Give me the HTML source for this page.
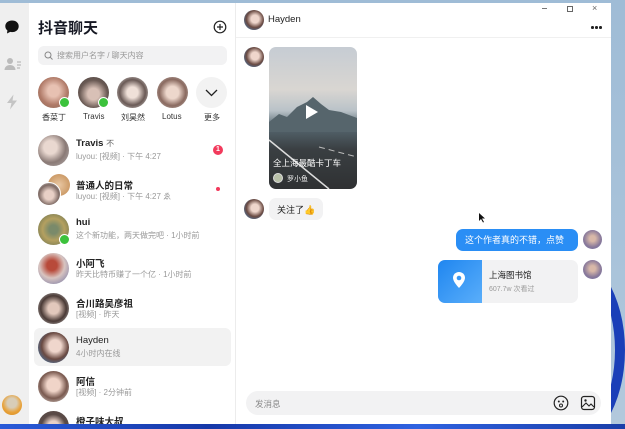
<!DOCTYPE html>
<html style="width:625px;height:429px;overflow:hidden"><head><meta charset="utf-8"><style>
*{margin:0;padding:0;box-sizing:border-box}
body{width:625px;height:429px;overflow:hidden;font-family:"Liberation Sans","Noto Sans CJK SC",sans-serif}
#root{position:relative;width:625px;height:429px;overflow:hidden;background:linear-gradient(180deg,#9fbcd6 0%,#a9c3da 60%,#b3c9dc 100%)}
.abs{position:absolute}
.av{position:absolute;border-radius:50%}
.t{position:absolute;white-space:nowrap}
.on{position:absolute;width:9px;height:9px;border-radius:50%;background:#3cc23c;border:1.5px solid #fff}
</style></head><body><div id="root">
<div class="abs" style="left:500px;top:250px;width:125px;height:200px;border-radius:50%;border:10px solid #1a3fb8;"></div>
<div class="abs" style="left:0;top:3px;width:611px;height:422px;background:#fff"></div>
<div class="abs" style="left:0;top:3px;width:29px;height:422px;background:#efefef"></div>
<svg class="abs" style="left:4px;top:19px" width="16" height="16" viewBox="0 0 16 16"><path d="M8 1.5C4 1.5 1.3 4 1.3 7.2c0 1.7.8 3.2 2.1 4.2L3 14.5l3.2-1.6c.6.1 1.2.2 1.8.2 4 0 6.7-2.6 6.7-5.9S12 1.5 8 1.5z" fill="#111"/></svg>
<svg class="abs" style="left:4px;top:57px" width="18" height="14" viewBox="0 0 18 14"><circle cx="6" cy="4" r="3" fill="#bbb"/><path d="M0.5 13c0-3 2.5-5 5.5-5s5.5 2 5.5 5z" fill="#bbb"/><path d="M13 5h4M13 8h4M13 11h3" stroke="#bbb" stroke-width="1.3"/></svg>
<svg class="abs" style="left:6px;top:94px" width="12" height="16" viewBox="0 0 12 16"><path d="M7.5 0.5L1 9h4.5L4 15.5 11 6.5H6.5z" fill="#c4c4c4"/></svg>
<div class="av" style="left:2px;top:395px;width:20px;height:20px;background:radial-gradient(circle at 50% 40%,#d8cdb8 30%,#e8a23a 60%,#d48a20)"></div>
<div class="abs" style="left:235px;top:3px;width:1px;height:422px;background:#ececec"></div>
<div class="t" style="left:38px;top:17px;font-size:15px;font-weight:bold;color:#161823">抖音聊天</div>
<svg class="abs" style="left:213px;top:20px" width="14" height="14" viewBox="0 0 14 14"><circle cx="7" cy="7" r="5.8" fill="none" stroke="#222" stroke-width="1.2"/><path d="M7 4v6M4 7h6" stroke="#222" stroke-width="1.2"/></svg>
<div class="abs" style="left:38px;top:46px;width:189px;height:19px;background:#f2f2f3;border-radius:6px"></div>
<svg class="abs" style="left:44px;top:51px" width="9" height="9" viewBox="0 0 9 9"><circle cx="4" cy="4" r="3" fill="none" stroke="#888" stroke-width="1"/><path d="M6.2 6.2L8.5 8.5" stroke="#888"/></svg>
<div class="t" style="left:57px;top:50px;font-size:8px;color:#999">搜索用户名字 / 聊天内容</div>
<div class="av" style="left:38px;top:77px;width:31px;height:31px;background:radial-gradient(circle at 50% 45%,#e7c1b2 25%,#b07a68 60%,#8a6a5a)"></div><div class="on" style="left:59px;top:97px;width:11px;height:11px"></div>
<div class="av" style="left:78px;top:77px;width:31px;height:31px;background:radial-gradient(circle at 50% 55%,#d8c0b6 25%,#6a5a54 60%,#4a4240)"></div><div class="on" style="left:98px;top:97px;width:11px;height:11px"></div>
<div class="av" style="left:117px;top:77px;width:31px;height:31px;background:radial-gradient(circle at 50% 50%,#efe0d8 25%,#6a5a56 58%,#e8e6e4)"></div>
<div class="av" style="left:157px;top:77px;width:31px;height:31px;background:radial-gradient(circle at 50% 50%,#edd7cc 28%,#8a6a60 60%,#c8c0bc)"></div>
<div class="av" style="left:196px;top:77px;width:31px;height:31px;background:#f2f2f2"></div>
<svg class="abs" style="left:205px;top:89px" width="13" height="8" viewBox="0 0 13 8"><path d="M1 1l5.5 5.5L12 1" fill="none" stroke="#222" stroke-width="1.3"/></svg>
<div class="t" style="left:42px;top:112px;font-size:8px;color:#333">香菜丁</div>
<div class="t" style="left:83px;top:112px;font-size:8px;color:#333">Travis</div>
<div class="t" style="left:121px;top:112px;font-size:8px;color:#333">刘昊然</div>
<div class="t" style="left:162px;top:112px;font-size:8px;color:#333">Lotus</div>
<div class="t" style="left:204px;top:112px;font-size:8px;color:#333">更多</div>
<div class="abs" style="left:34px;top:328px;width:197px;height:38px;background:#f2f2f2;border-radius:6px"></div>
<div class="av" style="left:38px;top:135px;width:31px;height:31px;background:radial-gradient(circle at 40% 40%,#e9d8d0 25%,#8a7a76 58%,#b6b0b0)"></div>
<div class="t" style="left:76px;top:138px;font-size:9.5px;font-weight:bold;color:#222">Travis <span style="font-weight:normal;font-size:8px;color:#666">不</span></div>
<div class="t" style="left:76px;top:151px;font-size:8px;color:#999">luyou: [视频] · 下午 4:27</div>
<div class="av" style="left:213px;top:145px;width:10px;height:10px;background:#f23a5c;color:#fff;font-size:7px;text-align:center;line-height:10px;font-weight:bold">1</div>
<div class="av" style="left:48px;top:174px;width:22px;height:22px;background:radial-gradient(#e9c8a4,#c0884e)"></div>
<div class="av" style="left:37px;top:182px;width:24px;height:24px;background:radial-gradient(circle at 50% 55%,#e8d0c6 28%,#7e6a64 62%,#ddd);border:1.5px solid #fff"></div>
<div class="t" style="left:76px;top:178px;font-size:9.5px;font-weight:bold;color:#222">普通人的日常</div>
<div class="t" style="left:76px;top:191px;font-size:8px;color:#999">luyou: [视频] · 下午 4:27 ゑ</div>
<div class="av" style="left:216px;top:187px;width:4px;height:4px;background:#f23a5c"></div>
<div class="av" style="left:38px;top:214px;width:31px;height:31px;background:radial-gradient(circle at 50% 50%,#7a8a6a 20%,#b4a060 50%,#5d6a4c)"></div><div class="on" style="left:59px;top:234px;width:11px;height:11px"></div>
<div class="t" style="left:76px;top:217px;font-size:9.5px;font-weight:bold;color:#222">hui</div>
<div class="t" style="left:76px;top:230px;font-size:8px;color:#999">这个新功能，两天做完吧 · 1小时前</div>
<div class="av" style="left:38px;top:253px;width:31px;height:31px;background:radial-gradient(circle at 45% 40%,#b84a3a 20%,#d8c4c0 50%,#6a6fa0)"></div>
<div class="t" style="left:76px;top:256px;font-size:9.5px;font-weight:bold;color:#222">小阿飞</div>
<div class="t" style="left:76px;top:269px;font-size:8px;color:#999">昨天比特币赚了一个亿 · 1小时前</div>
<div class="av" style="left:38px;top:293px;width:31px;height:31px;background:radial-gradient(circle at 50% 50%,#e2c8bc 25%,#4a3a36 58%,#d8d8d8)"></div>
<div class="t" style="left:76px;top:296px;font-size:9.5px;font-weight:bold;color:#222">合川路吴彦祖</div>
<div class="t" style="left:76px;top:309px;font-size:8px;color:#999">[视频] · 昨天</div>
<div class="av" style="left:38px;top:332px;width:31px;height:31px;background:radial-gradient(circle at 55% 45%,#efd6cc 25%,#6a4a42 55%,#3a8ad0)"></div>
<div class="t" style="left:76px;top:335px;font-size:9.5px;color:#222">Hayden</div>
<div class="t" style="left:76px;top:348px;font-size:8px;color:#999">4小时内在线</div>
<div class="av" style="left:38px;top:371px;width:31px;height:31px;background:radial-gradient(circle at 50% 45%,#f0d4c8 28%,#7a5a50 58%,#e8e2de)"></div>
<div class="t" style="left:76px;top:374px;font-size:9.5px;font-weight:bold;color:#222">阿信</div>
<div class="t" style="left:76px;top:387px;font-size:8px;color:#999">[视频] · 2分钟前</div>
<div class="av" style="left:38px;top:411px;width:31px;height:31px;background:radial-gradient(#e8d0c6 25%,#5a4a46 55%)"></div>
<div class="t" style="left:76px;top:414px;font-size:9.5px;font-weight:bold;color:#222">橙子味大叔</div>
<div class="abs" style="left:0;top:424px;width:625px;height:5px;background:linear-gradient(90deg,#2a5bd8,#1638a8,#2f62e0,#1a3ea8)"></div>
<div class="av" style="left:244px;top:10px;width:20px;height:20px;background:radial-gradient(circle at 55% 45%,#efd6cc 25%,#6a4a42 55%,#3a8ad0)"></div>
<div class="t" style="left:268px;top:14px;font-size:9.5px;color:#222">Hayden</div>
<div class="abs" style="left:542px;top:8px;width:5px;height:1px;background:#777"></div>
<div class="abs" style="left:567px;top:6px;width:6px;height:6px;border:1px solid #666"></div>
<div class="t" style="left:592px;top:3px;font-size:9px;color:#666">×</div>
<div class="av" style="left:591px;top:26px;width:2.5px;height:2.5px;background:#222"></div>
<div class="av" style="left:595px;top:26px;width:2.5px;height:2.5px;background:#222"></div>
<div class="av" style="left:599px;top:26px;width:2.5px;height:2.5px;background:#222"></div>
<div class="abs" style="left:236px;top:37px;width:375px;height:1px;background:#f0f0f0"></div>
<div class="av" style="left:244px;top:47px;width:20px;height:20px;background:radial-gradient(circle at 55% 45%,#efd6cc 25%,#6a4a42 55%,#3a8ad0)"></div>
<div class="abs" style="left:269px;top:47px;width:88px;height:142px;border-radius:7px;overflow:hidden;background:linear-gradient(180deg,#c6ccd3 0%,#d9d6d2 30%,#b9c2c8 45%,#7a8890 52%,#4f5d64 60%,#3a3f42 72%,#2f3133 100%)">
<svg class="abs" style="left:0;top:45px" width="88" height="40" viewBox="0 0 88 40"><path d="M0 30L10 22 18 25 28 15 38 10 44 5 52 12 60 18 72 20 88 26V40H0z" fill="#56656c"/></svg>
<svg class="abs" style="left:0;top:85px" width="88" height="57" viewBox="0 0 88 57"><path d="M0 8L60 57" stroke="#ddd" stroke-width="1.5"/><path d="M50 15L88 25" stroke="#bbb" stroke-width="1" stroke-dasharray="6 4"/></svg>
</div>
<svg class="abs" style="left:305px;top:104px" width="14" height="16" viewBox="0 0 14 16"><path d="M1 1L13 8 1 15z" fill="#fff"/></svg>
<div class="t" style="left:273px;top:157px;font-size:8.5px;color:#fff">全上海最酷卡丁车</div>
<div class="av" style="left:273px;top:173px;width:10px;height:10px;background:#b8c0a8;border:1px solid #ddd"></div>
<div class="t" style="left:287px;top:174px;font-size:7px;color:#eee">罗小鱼</div>
<div class="av" style="left:244px;top:199px;width:20px;height:20px;background:radial-gradient(circle at 55% 45%,#efd6cc 25%,#6a4a42 55%,#3a8ad0)"></div>
<div class="abs" style="left:269px;top:198px;width:54px;height:22px;background:#f2f2f3;border-radius:7px"></div>
<div class="t" style="left:277px;top:203px;font-size:9px;color:#222">关注了<span style="color:#f2b233">👍</span></div>
<div class="abs" style="left:456px;top:229px;width:122px;height:22px;background:#2a8ef5;border-radius:7px"></div>
<div class="t" style="left:465px;top:233px;font-size:9px;color:#fff">这个作者真的不错，点赞</div>
<div class="av" style="left:583px;top:230px;width:19px;height:19px;background:radial-gradient(circle at 50% 45%,#d8b8a8 20%,#8a7a9a 60%,#6a6aa8)"></div>
<div class="abs" style="left:438px;top:260px;width:140px;height:43px;background:#f2f2f3;border-radius:7px;overflow:hidden"><div class="abs" style="left:0;top:0;width:44px;height:43px;background:linear-gradient(135deg,#1f86f0,#5aaefa)"></div></div>
<svg class="abs" style="left:452px;top:271px" width="14" height="18" viewBox="0 0 14 18"><path d="M7 1C3.7 1 1 3.5 1 6.8 1 11 7 17 7 17s6-6 6-10.2C13 3.5 10.3 1 7 1z" fill="#fff"/><circle cx="7" cy="7" r="2.3" fill="#3a98f5"/></svg>
<div class="t" style="left:489px;top:269px;font-size:8.5px;color:#222">上海图书馆</div>
<div class="t" style="left:489px;top:284px;font-size:7px;color:#999">607.7w 次看过</div>
<div class="av" style="left:583px;top:260px;width:19px;height:19px;background:radial-gradient(circle at 50% 45%,#d8b8a8 20%,#8a7a9a 60%,#6a6aa8)"></div>
<svg class="abs" style="left:478px;top:212px" width="8" height="11" viewBox="0 0 8 11"><path d="M1 1v8l2-2 2 3.5 1-.5-2-3.5h3z" fill="#111"/></svg>
<div class="abs" style="left:246px;top:391px;width:355px;height:24px;background:#f2f2f3;border-radius:12px"></div>
<div class="t" style="left:255px;top:398px;font-size:8.5px;color:#888">发消息</div>
<svg class="abs" style="left:553px;top:395px" width="16" height="16" viewBox="0 0 16 16"><circle cx="8" cy="8" r="6.8" fill="none" stroke="#222" stroke-width="1.2"/><circle cx="5.8" cy="6.5" r="1" fill="#222"/><circle cx="10.2" cy="6.5" r="1" fill="#222"/><circle cx="8" cy="10.5" r="1.5" fill="none" stroke="#222"/></svg>
<svg class="abs" style="left:580px;top:395px" width="16" height="16" viewBox="0 0 16 16"><rect x="1.5" y="1.5" width="13" height="13" rx="2.5" fill="none" stroke="#222" stroke-width="1.2"/><circle cx="5.5" cy="5.5" r="1.2" fill="#222"/><path d="M2 12l4-4 3 3 2-2 3 3" fill="none" stroke="#222" stroke-width="1.1"/></svg>
</div></body></html>
